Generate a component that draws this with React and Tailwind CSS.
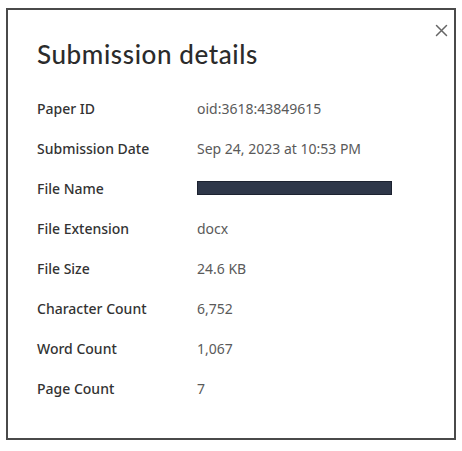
export default function App() {
  const rows = [
    ["Paper ID", "oid:3618:43849615"],
    ["Submission Date", "Sep 24, 2023 at 10:53 PM"],
    ["File Name", null],
    ["File Extension", "docx"],
    ["File Size", "24.6 KB"],
    ["Character Count", "6,752"],
    ["Word Count", "1,067"],
    ["Page Count", "7"],
  ];
  return (
    <div className="w-[462px] h-[451px] bg-white pt-[8px] pl-[6px]">
      <div className="relative w-[450px] h-[432px] border-2 border-[#4a4a4a] bg-white pl-[29px] pt-[28px]">
        <button className="absolute top-[13px] right-[6px] w-[14px] h-[14px] flex items-center justify-center">
          <svg width="13" height="13" viewBox="0 0 13 13" fill="none" stroke="#666" strokeWidth="1.5" strokeLinecap="round">
            <path d="M1.5 1.5L11.5 11.5M11.5 1.5L1.5 11.5" />
          </svg>
        </button>
        <h2 className="text-[26px] leading-[32px] font-medium text-[#2b2b2b] tracking-[0.6px]" style={{ fontFamily: "Lato, 'Noto Sans', sans-serif" }}>
          Submission details
        </h2>
        <div className="mt-[18px] flex flex-col" style={{ fontFamily: "'Noto Sans', sans-serif" }}>
          {rows.map(([label, value]) => (
            <div key={label} className="flex items-center h-[40px]">
              <div className="w-[160px] text-[14px] font-medium text-[#333333]">{label}</div>
              {value === null ? (
                <div className="w-[195px] h-[14px] bg-[#2e3749] border border-[#1c2230]" />
              ) : (
                <div className="text-[14px] text-[#5a5a5a]">{value}</div>
              )}
            </div>
          ))}
        </div>
      </div>
    </div>
  );
}
